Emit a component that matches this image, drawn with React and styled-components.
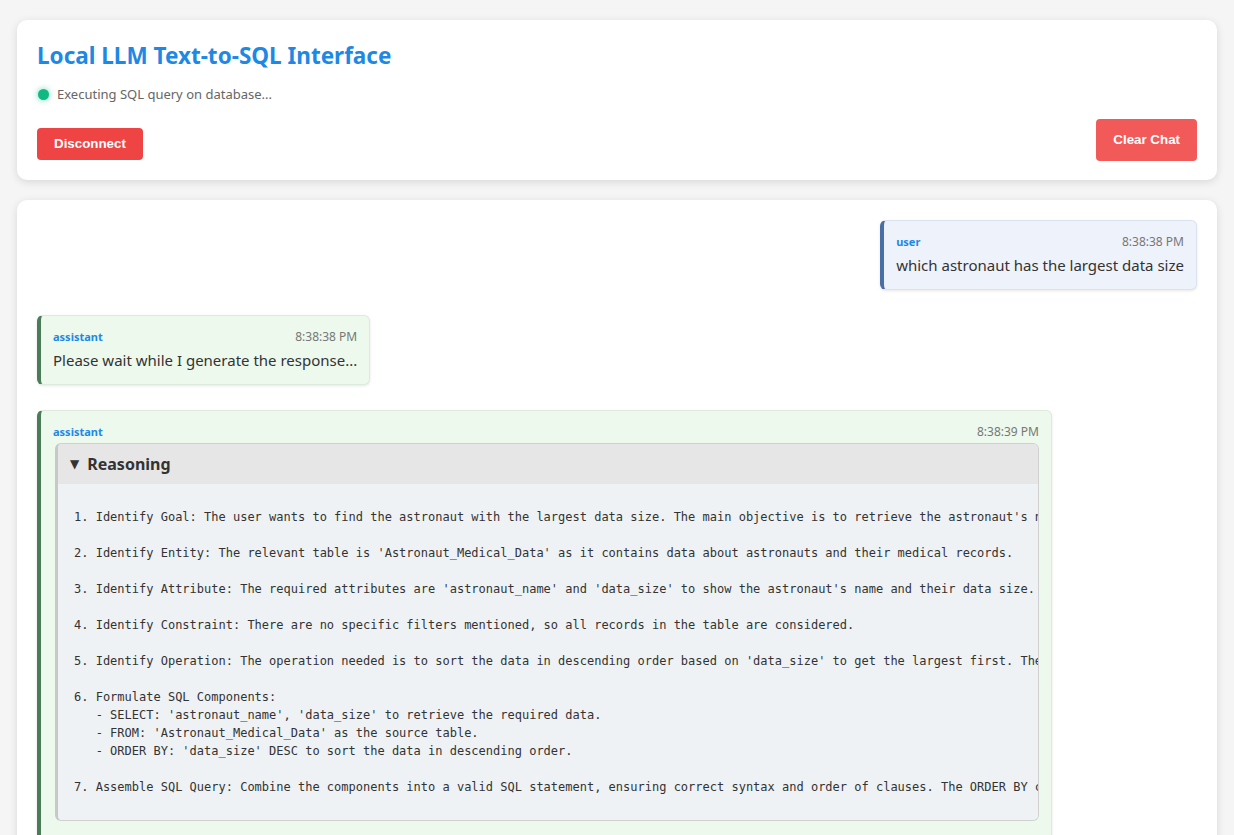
import React from 'react';
import styled, { createGlobalStyle } from 'styled-components';

const GlobalStyle = createGlobalStyle`
    html, body {
        margin: 0;
        padding: 0;
        background: #f5f5f5;
        font-family: "Noto Sans", "DejaVu Sans", sans-serif;
        color: #333;
    }
    * {
        box-sizing: border-box;
    }
`;

const Page = styled.div`
    max-width: 1200px;
    margin: 0 auto;
    padding: 20px 0;
    display: flex;
    flex-direction: column;
    gap: 20px;
`;

const Card = styled.div`
    background: #ffffff;
    border-radius: 10px;
    box-shadow: 0 2px 8px rgba(0, 0, 0, 0.12);
    padding: 20px;
`;

const Header = styled(Card)`
    display: flex;
    justify-content: space-between;
    align-items: flex-end;
`;

const HeaderLeft = styled.div`
    display: flex;
    flex-direction: column;
    align-items: flex-start;
`;

const Title = styled.h1`
    margin: 0;
    font-size: 22.5px;
    line-height: 32px;
    font-weight: 700;
    color: #1e88e5;
`;

const Status = styled.div`
    display: flex;
    align-items: center;
    gap: 8px;
    margin-top: 12px;
    font-size: 13px;
    line-height: 20px;
    color: #666;
`;

const Dot = styled.span`
    width: 11px;
    height: 11px;
    border-radius: 50%;
    background: #10b981;
    box-shadow: 0 0 6px rgba(16, 185, 129, 0.6);
    margin-left: 1px;
`;

const Button = styled.button`
    border: none;
    border-radius: 4px;
    color: #fff;
    font-family: "Liberation Sans", Arial, sans-serif;
    font-weight: 700;
    font-size: 13.33px;
    cursor: pointer;
    background: ${p => (p.$soft ? '#f25a5a' : '#ef4444')};
    padding: ${p => (p.$soft ? '12px 17px' : '8px 17px')};
    line-height: ${p => (p.$soft ? '18px' : '16px')};
    margin-top: ${p => (p.$soft ? '0' : '24px')};
    margin-bottom: ${p => (p.$soft ? '-1px' : '0')};
`;

const ChatCard = styled(Card)`
    display: flex;
    flex-direction: column;
    gap: 25px;
`;

const Message = styled.div`
    align-self: ${p => (p.$user ? 'flex-end' : 'flex-start')};
    max-width: 85%;
    box-sizing: content-box;
    padding: 12px;
    border-radius: 6px;
    border: 1px solid ${p => (p.$user ? '#dde3ee' : '#dcebdc')};
    border-left: 4px solid ${p => (p.$user ? '#4a6fa5' : '#4a7c59')};
    background: ${p => (p.$user ? '#eef2fb' : '#edf9ed')};
    box-shadow: 0 1px 3px rgba(0, 0, 0, 0.1);
`;

const MessageHead = styled.div`
    display: flex;
    justify-content: space-between;
    align-items: center;
    gap: 24px;
    height: 16px;
    margin-bottom: 4px;
`;

const Role = styled.span`
    font-size: 11px;
    font-weight: 700;
    color: #1e88e5;
`;

const Time = styled.span`
    font-size: 12px;
    color: #777;
`;

const Text = styled.div`
    font-size: 15px;
    line-height: 24px;
    color: #333;
`;

const Details = styled.details`
    border: 1px solid #d0d0d0;
    border-left: 3px solid #c8c8c8;
    border-radius: 6px;
    overflow: hidden;
    margin-left: 2px;
`;

const Summary = styled.summary`
    background: #e6e6e6;
    padding: 10px 12px;
    font-size: 16px;
    line-height: 20px;
    font-weight: 700;
    color: #333;
    cursor: pointer;
    list-style: none;
    display: flex;
    align-items: center;
    gap: 8px;

    &::-webkit-details-marker {
        display: none;
    }
`;

const Caret = styled.span`
    font-size: 12px;
    line-height: 20px;
`;

const Pre = styled.pre`
    margin: 0;
    background: #eef2f5;
    padding: 24px 16px;
    font-family: "DejaVu Sans Mono", monospace;
    font-size: 12px;
    line-height: 18px;
    color: #333;
    overflow: hidden;
    white-space: pre;
`;

const SqlBlock = styled.pre`
    margin: 20px 0 0;
    background: #2d2d2d;
    color: #f8f8f2;
    border-radius: 6px;
    padding: 12px 16px;
    font-family: "DejaVu Sans Mono", monospace;
    font-size: 12px;
    line-height: 18px;
`;

const reasoning = `1. Identify Goal: The user wants to find the astronaut with the largest data size. The main objective is to retrieve the astronaut's name and their data size.

2. Identify Entity: The relevant table is 'Astronaut_Medical_Data' as it contains data about astronauts and their medical records.

3. Identify Attribute: The required attributes are 'astronaut_name' and 'data_size' to show the astronaut's name and their data size.

4. Identify Constraint: There are no specific filters mentioned, so all records in the table are considered.

5. Identify Operation: The operation needed is to sort the data in descending order based on 'data_size' to get the largest first. Then limit the result to 1 row.

6. Formulate SQL Components:
   - SELECT: 'astronaut_name', 'data_size' to retrieve the required data.
   - FROM: 'Astronaut_Medical_Data' as the source table.
   - ORDER BY: 'data_size' DESC to sort the data in descending order.

7. Assemble SQL Query: Combine the components into a valid SQL statement, ensuring correct syntax and order of clauses. The ORDER BY clause comes before LIMIT.`;

const App = () => {
    return (
        <>
            <GlobalStyle />
            <Page>
                <Header>
                    <HeaderLeft>
                        <Title>Local LLM Text-to-SQL Interface</Title>
                        <Status>
                            <Dot />
                            Executing SQL query on database...
                        </Status>
                        <Button>Disconnect</Button>
                    </HeaderLeft>
                    <Button $soft>Clear Chat</Button>
                </Header>

                <ChatCard>
                    <Message $user>
                        <MessageHead>
                            <Role>user</Role>
                            <Time>8:38:38 PM</Time>
                        </MessageHead>
                        <Text>which astronaut has the largest data size</Text>
                    </Message>

                    <Message>
                        <MessageHead>
                            <Role>assistant</Role>
                            <Time>8:38:38 PM</Time>
                        </MessageHead>
                        <Text>Please wait while I generate the response...</Text>
                    </Message>

                    <Message>
                        <MessageHead>
                            <Role>assistant</Role>
                            <Time>8:38:39 PM</Time>
                        </MessageHead>
                        <Details open>
                            <Summary>
                                <Caret>▼</Caret>
                                Reasoning
                            </Summary>
                            <Pre>{reasoning}</Pre>
                        </Details>
                        <SqlBlock>{`SELECT astronaut_name, data_size
FROM Astronaut_Medical_Data
ORDER BY data_size DESC
LIMIT 1;`}</SqlBlock>
                    </Message>
                </ChatCard>
            </Page>
        </>
    );
};

export default App;
